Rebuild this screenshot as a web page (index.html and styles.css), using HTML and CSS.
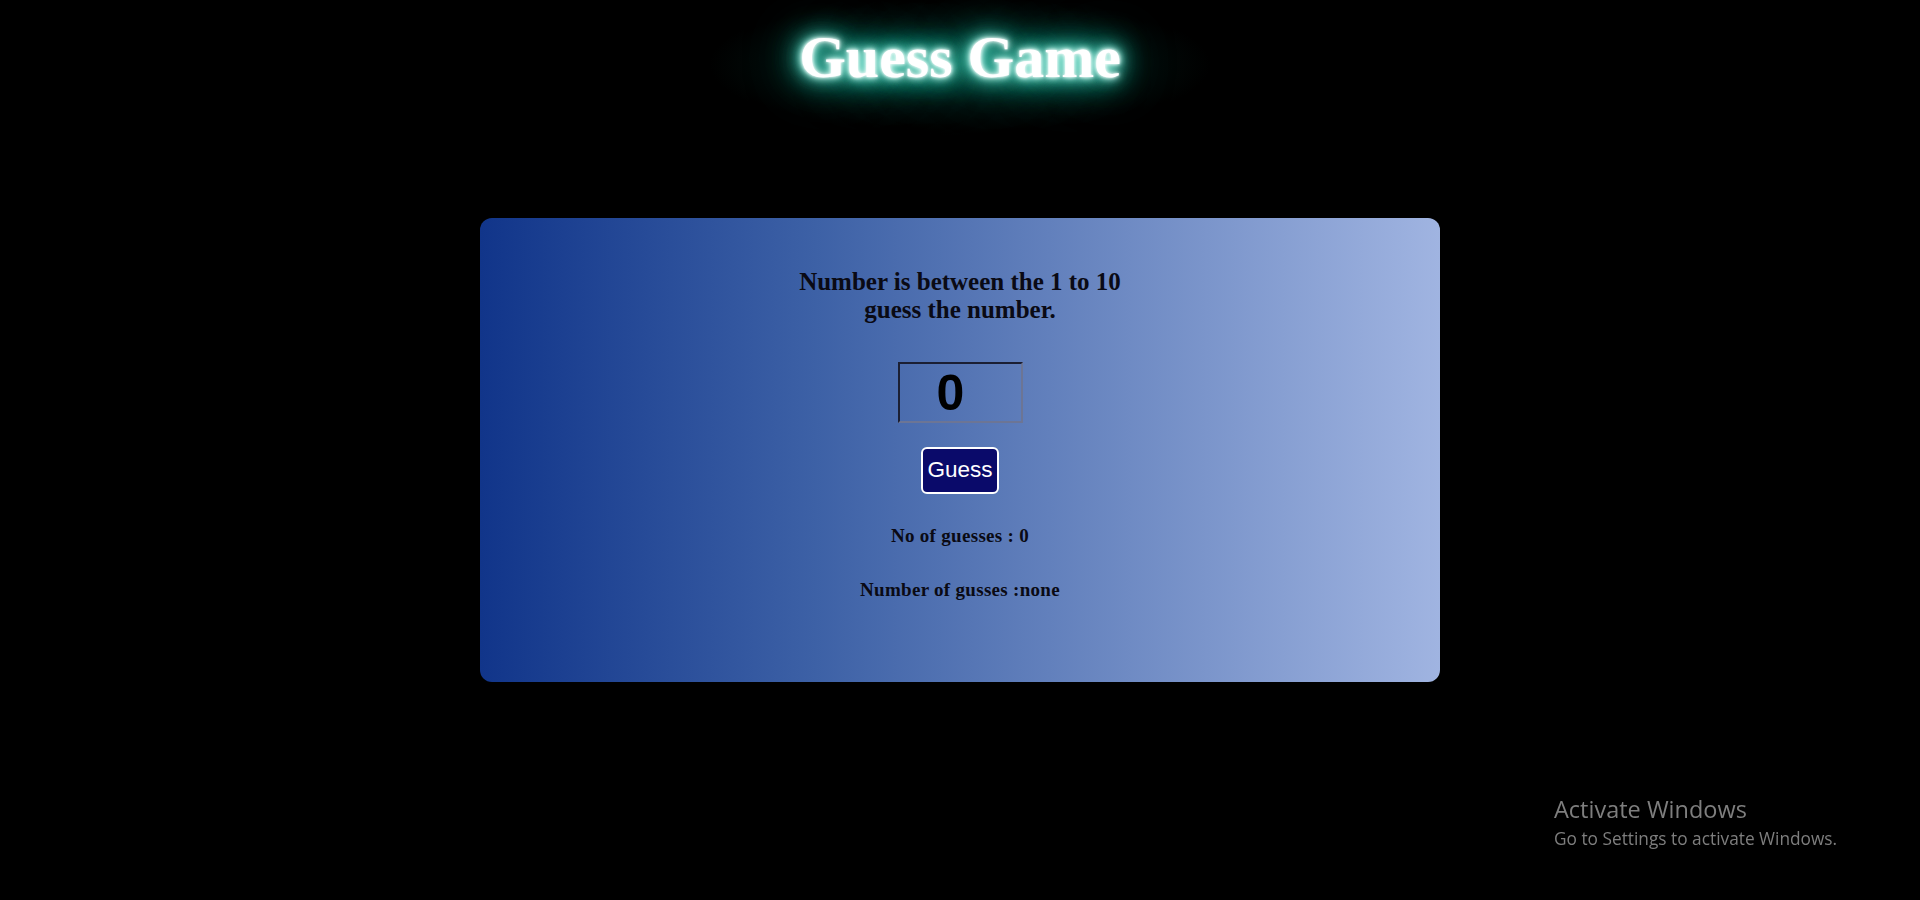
FILE: index.html
```html
<!DOCTYPE html>
<html>
<head>
<meta charset="utf-8">
<title>Guess Game</title>
<link rel="stylesheet" href="styles.css">
</head>
<body>
<h1 class="title">Guess Game</h1>
<main class="card">
  <h2 class="prompt">Number is between the 1 to 10<br>guess the number.</h2>
  <input class="guess-input" type="text" value="0">
  <button class="guess-btn">Guess</button>
  <p class="stat stat-count">No of guesses : 0</p>
  <p class="stat stat-list">Number of gusses :none</p>
</main>
<div class="activate">
  <div class="activate-title">Activate Windows</div>
  <div class="activate-sub">Go to Settings to activate Windows.</div>
</div>
</body>
</html>
```
FILE: styles.css
```css
html {
  background: #000;
}
html, body {
  margin: 0;
  padding: 0;
  height: 100%;
  overflow: hidden;
}
body {
  font-family: "Liberation Serif", "Times New Roman", serif;
  display: flex;
  flex-direction: column;
  align-items: center;
}
.title {
  position: relative;
  margin: 24px 0 0;
  font-size: 60px;
  font-weight: bold;
  color: #fff;
  line-height: 66px;
  text-shadow: 0 0 3px #fff, 0 0 6px #f0fffb, 0 0 10px #9af0e0, 0 0 16px #4fd6bf, 0 0 22px #3cc8b0, 0 0 30px #2bb49d, 0 0 40px #1d9a86, 0 0 55px #137a6a;
}
.title::before {
  content: "";
  position: absolute;
  left: -90px;
  right: -90px;
  top: -30px;
  bottom: -45px;
  z-index: -1;
  background: radial-gradient(closest-side, rgba(30, 140, 118, 0.45), rgba(14, 80, 68, 0.22) 55%, rgba(0, 0, 0, 0) 100%);
}
.card {
  margin-top: 128px;
  width: 960px;
  box-sizing: border-box;
  padding: 50px 0 81px;
  border-radius: 12px;
  background: linear-gradient(to right, #11358a, #3d61a6 35%, #a0b4e1);
  display: flex;
  flex-direction: column;
  align-items: center;
}
.prompt {
  margin: 0;
  font-size: 25px;
  line-height: 28px;
  text-align: center;
  color: #0a0a14;
}
.guess-input {
  margin-top: 38px;
  width: 125px;
  height: 61px;
  box-sizing: border-box;
  padding: 0 0 0 37px;
  border: 2px solid;
  border-color: #1b1f33 #6c7595 #6c7595 #1b1f33;
  background: transparent;
  font-family: "Liberation Sans", Arial, sans-serif;
  font-weight: bold;
  font-size: 50px;
  color: #000;
  outline: none;
}
.guess-btn {
  margin-top: 24px;
  width: 78px;
  height: 47px;
  box-sizing: border-box;
  padding: 0 0 2px;
  border: 2px solid #fff;
  border-radius: 6px;
  background: #0a0a6a;
  color: #fff;
  font-family: "Liberation Sans", Arial, sans-serif;
  font-size: 22.5px;
}
.stat {
  margin: 0;
  font-size: 19px;
  font-weight: bold;
  line-height: 23px;
  color: #0a0a14;
  letter-spacing: 0.3px;
}
.stat-count {
  margin-top: 30px;
}
.stat-list {
  margin-top: 31px;
}
.activate {
  position: fixed;
  left: 1554px;
  top: 794px;
  color: #7e7e7e;
  font-family: "Open Sans", "Noto Sans", sans-serif;
}
.activate-title {
  font-size: 23.5px;
  line-height: 30px;
}
.activate-sub {
  margin-top: 3px;
  font-size: 17.3px;
  line-height: 24px;
}
```
